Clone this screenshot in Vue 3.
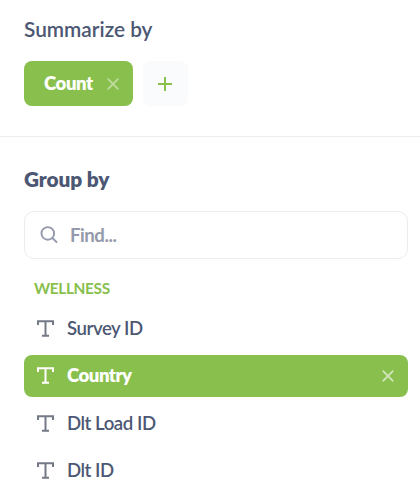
<script setup>
const fields = [
  { name: 'Survey ID' },
  { name: 'Country', selected: true },
  { name: 'Dlt Load ID' },
  { name: 'Dlt ID' },
]
</script>

<template>
  <main class="sidebar">
    <section class="summarize">
      <h2 class="heading summary-title"><span>Summarize by</span></h2>
      <div class="metrics">
        <button class="metric">
          <span class="metric-label">Count</span>
          <svg class="close" viewBox="0 0 12 12"><path d="M.7.7l10.6 10.6M11.3.7L.7 11.3" /></svg>
        </button>
        <button class="add" aria-label="Add">
          <svg class="plus" viewBox="0 0 14 14"><path d="M7 0v14M0 7h14" /></svg>
        </button>
      </div>
    </section>
    <section class="group">
      <h2 class="heading group-title"><span>Group by</span></h2>
      <label class="search">
        <svg class="magnifier" viewBox="0 0 18 18"><circle cx="7.8" cy="7.4" r="6.3" /><path d="M12.4 12l4.7 4.7" /></svg>
        <span class="placeholder">Find...</span>
      </label>
      <h3 class="category"><span>WELLNESS</span></h3>
      <ul class="fields">
        <li v-for="field in fields" :key="field.name" class="field" :class="{ selected: field.selected }">
          <svg class="type" viewBox="0 0 17 17"><path d="M1 5V1.2h15V5M8.5 1.2v14.5M5 15.7h7" /></svg>
          <span class="field-name">{{ field.name }}</span>
          <svg v-if="field.selected" class="close" viewBox="0 0 12 12"><path d="M.7.7l10.6 10.6M11.3.7L.7 11.3" /></svg>
        </li>
      </ul>
    </section>
  </main>
</template>

<style>
body { margin: 0; background: #fff; }
</style>

<style scoped>
* { box-sizing: border-box; }
.sidebar {
  height: 502px;
  overflow: hidden;
  font-family: Lato, "Liberation Sans", sans-serif;
  font-size: 18.6px;
  letter-spacing: -0.45px;
  color: #4c5773;
}
svg { display: block; flex: none; fill: none; stroke: currentColor; }
button { border: 0; font: inherit; letter-spacing: inherit; }
.summarize { height: 137px; padding: 16px 24px 0; border-bottom: 1px solid #ececec; }
.heading { margin: 0; font-size: 20.8px; line-height: 26px; letter-spacing: 0; }
.summary-title { font-weight: 600; }
.group-title { font-weight: 800; letter-spacing: -0.1px; }
.metrics { display: flex; gap: 10px; margin-top: 19px; }
.metric {
  display: flex;
  align-items: center;
  justify-content: space-between;
  width: 109px;
  height: 45px;
  padding: 0 14px 0 20px;
  border-radius: 8px;
  background: #88bf4d;
  color: #fff;
  font-weight: 800;
}
.metric-label { padding-bottom: 1px; }
.close { width: 12px; height: 12px; stroke-width: 1.9; opacity: .6; }
.metric .close { opacity: .45; }
.add {
  display: flex;
  align-items: center;
  width: 45px;
  height: 45px;
  padding: 0 0 0 15px;
  border-radius: 8px;
  background: #f9fbfc;
  color: #88bf4d;
}
.plus { width: 14px; height: 14px; stroke-width: 2; }
.group { padding: 29px 12px 0 24px; }
.search {
  display: flex;
  align-items: center;
  gap: 12px;
  height: 48px;
  margin-top: 19px;
  padding-left: 15px;
  border: 1px solid #ececec;
  border-radius: 10px;
  color: #949aab;
}
.magnifier { width: 18px; height: 18px; margin-bottom: 1px; stroke-width: 1.9; }
.placeholder { font-weight: 700; }
.category {
  margin: 20px 0 0 10px;
  font-size: 15.4px;
  line-height: 18px;
  letter-spacing: -0.35px;
  font-weight: 700;
  color: #88bf4d;
}
.fields { display: grid; gap: 5.5px; margin: 10px 0 0; padding: 0; list-style: none; }
.field {
  display: flex;
  align-items: center;
  height: 42px;
  padding: 0 14px 0 13px;
  border-radius: 8px;
  font-weight: 600;
}
.type { width: 17px; height: 17px; margin-right: 13px; stroke-width: 2; color: #747986; }
.field-name { flex: 1; padding-bottom: 1px; }
.selected { background: #88bf4d; color: #fff; font-weight: 800; }
.selected .type { color: #fff; }
.selected .field-name { letter-spacing: -0.5px; }
</style>
